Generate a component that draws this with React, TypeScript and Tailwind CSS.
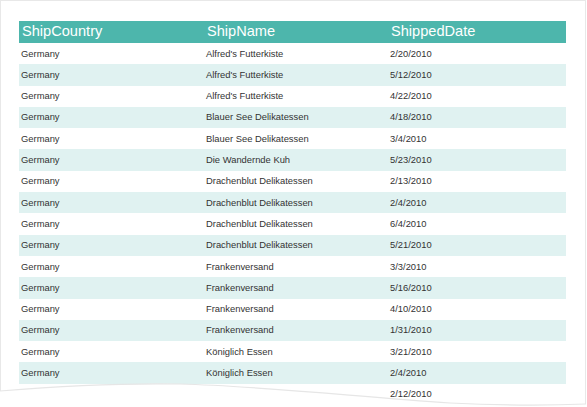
const rows = [
  ["Germany", "Alfred's Futterkiste", "2/20/2010"],
  ["Germany", "Alfred's Futterkiste", "5/12/2010"],
  ["Germany", "Alfred's Futterkiste", "4/22/2010"],
  ["Germany", "Blauer See Delikatessen", "4/18/2010"],
  ["Germany", "Blauer See Delikatessen", "3/4/2010"],
  ["Germany", "Die Wandernde Kuh", "5/23/2010"],
  ["Germany", "Drachenblut Delikatessen", "2/13/2010"],
  ["Germany", "Drachenblut Delikatessen", "2/4/2010"],
  ["Germany", "Drachenblut Delikatessen", "6/4/2010"],
  ["Germany", "Drachenblut Delikatessen", "5/21/2010"],
  ["Germany", "Frankenversand", "3/3/2010"],
  ["Germany", "Frankenversand", "5/16/2010"],
  ["Germany", "Frankenversand", "4/10/2010"],
  ["Germany", "Frankenversand", "1/31/2010"],
  ["Germany", "Königlich Essen", "3/21/2010"],
  ["Germany", "Königlich Essen", "2/4/2010"],
  ["Germany", "Königlich Essen", "2/12/2010"],
];

export default function App() {
  return (
    <div className="relative w-[587px] h-[407px] overflow-hidden bg-white font-['Liberation_Sans',Arial,sans-serif]">
      {/* page sheet */}
      <div className="w-[586px] h-[420px] border border-[#e8e8e8] pl-[18px] pt-[20px]">
        <div className="w-[547px]">
          <div className="flex h-[22px] items-center bg-[#4db6ac] text-[14.6px] text-white">
            <div className="w-[185px] pl-[3px]">ShipCountry</div>
            <div className="w-[184px] pl-[3px]">ShipName</div>
            <div className="w-[178px] pl-[3px]">ShippedDate</div>
          </div>
          {rows.map((r, i) => (
            <div
              key={i}
              className={`flex h-[21.3px] items-center text-[9.4px] text-[#333] ${i % 2 === 1 ? "bg-[#e0f2f1]" : "bg-white"}`}
            >
              <div className="w-[185px] pl-[2px]">{r[0]}</div>
              <div className="w-[184px] pl-[2px]">{r[1]}</div>
              <div className="w-[178px] pl-[2px]">{r[2]}</div>
            </div>
          ))}
        </div>
      </div>

      {/* curled bottom edge of the sheet */}
      <svg className="absolute left-0 top-[370px]" width="587" height="37" viewBox="0 370 587 37">
        <path
          d="M0,391 C60,386 120,383 180,384 C260,386 350,396 450,403 C500,405.5 550,405.5 586,404 L587,404 L587,407 L0,407 Z"
          fill="#ffffff"
        />
        <path
          d="M0,391 C60,386 120,383 180,384 C260,386 350,396 450,403 C500,405.5 550,405.5 586,404"
          fill="none"
          stroke="#e6e6e6"
          strokeWidth="1.2"
        />
      </svg>
    </div>
  );
}
